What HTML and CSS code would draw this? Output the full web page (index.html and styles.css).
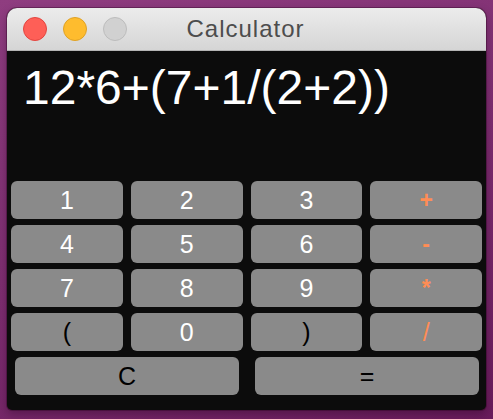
FILE: index.html
```html
<!DOCTYPE html>
<html>
<head>
<meta charset="utf-8">
<link rel="stylesheet" href="styles.css">
</head>
<body>
<div class="window">
  <div class="titlebar">
    <div class="lights">
      <span class="light red"></span>
      <span class="light yellow"></span>
      <span class="light gray"></span>
    </div>
    <div class="title">Calculator</div>
  </div>
  <div class="content">
    <div class="display">12*6+(7+1/(2+2))</div>
    <div class="keys">
      <button class="key num">1</button>
      <button class="key num">2</button>
      <button class="key num">3</button>
      <button class="key op">+</button>
      <button class="key num">4</button>
      <button class="key num">5</button>
      <button class="key num">6</button>
      <button class="key op">-</button>
      <button class="key num">7</button>
      <button class="key num">8</button>
      <button class="key num">9</button>
      <button class="key op">*</button>
      <button class="key dark">(</button>
      <button class="key num">0</button>
      <button class="key dark">)</button>
      <button class="key op slash">/</button>
    </div>
    <div class="bottom">
      <button class="key dark">C</button>
      <button class="key dark">=</button>
    </div>
  </div>
</div>
</body>
</html>
```

FILE: styles.css
```css
html, body {
  margin: 0;
  padding: 0;
}
body {
  width: 493px;
  height: 419px;
  overflow: hidden;
  background: linear-gradient(160deg, #8f3d80 0%, #7d2d70 50%, #6a1c5c 100%);
  padding-top: 8px;
  padding-left: 7px;
  box-sizing: border-box;
  font-family: "Liberation Sans", Arial, sans-serif;
}
.window {
  width: 479px;
  height: 402px;
  border-radius: 10px 10px 5px 5px;
  overflow: hidden;
  background: #0c0c0c;
  box-shadow: 0 0 0 1px rgba(40, 0, 30, 0.35), 0 4px 10px rgba(30, 0, 25, 0.35);
  display: flex;
  flex-direction: column;
}
.titlebar {
  height: 43px;
  flex: none;
  box-sizing: border-box;
  background: linear-gradient(#ececec, #d5d5d5);
  border-bottom: 1px solid #b4b4b4;
  display: flex;
  align-items: center;
  position: relative;
}
.lights {
  display: flex;
  gap: 16px;
  padding-left: 16px;
}
.light {
  width: 24px;
  height: 24px;
  border-radius: 50%;
  box-sizing: border-box;
}
.red { background: #fe5f57; border: 1px solid #e2453f; }
.yellow { background: #febc2e; border: 1px solid #dea126; }
.gray { background: #d1d1d1; border: 1px solid #bcbcbc; }
.title {
  position: absolute;
  left: 0;
  right: 0;
  top: 0;
  bottom: 0;
  display: flex;
  align-items: center;
  justify-content: center;
  font-size: 24px;
  letter-spacing: 1px;
  color: #4d4d4d;
  padding-right: 2px;
}
.content {
  flex: 1;
  display: flex;
  flex-direction: column;
}
.display {
  height: 130px;
  box-sizing: border-box;
  padding: 13px 0 0 16px;
  font-size: 48px;
  line-height: 48px;
  color: #ffffff;
  flex: none;
}
.keys {
  display: grid;
  grid-template-columns: repeat(4, 1fr);
  grid-auto-rows: 38px;
  gap: 6px 8px;
  padding: 0 4px;
}
.bottom {
  display: grid;
  grid-template-columns: 1fr 1fr;
  grid-auto-rows: 38px;
  gap: 16px;
  padding: 6px 7px 0 8px;
}
.key {
  border: none;
  margin: 0;
  padding: 0;
  background: #8a8a8a;
  border-radius: 6px;
  font-family: "Liberation Sans", Arial, sans-serif;
  font-size: 25px;
  line-height: 38px;
  text-align: center;
}
.num { color: #ffffff; }
.op { color: #ff8d55; font-weight: bold; font-size: 23px; }
.op.slash { font-weight: normal; font-size: 25px; }
.dark { color: #000000; }
```
